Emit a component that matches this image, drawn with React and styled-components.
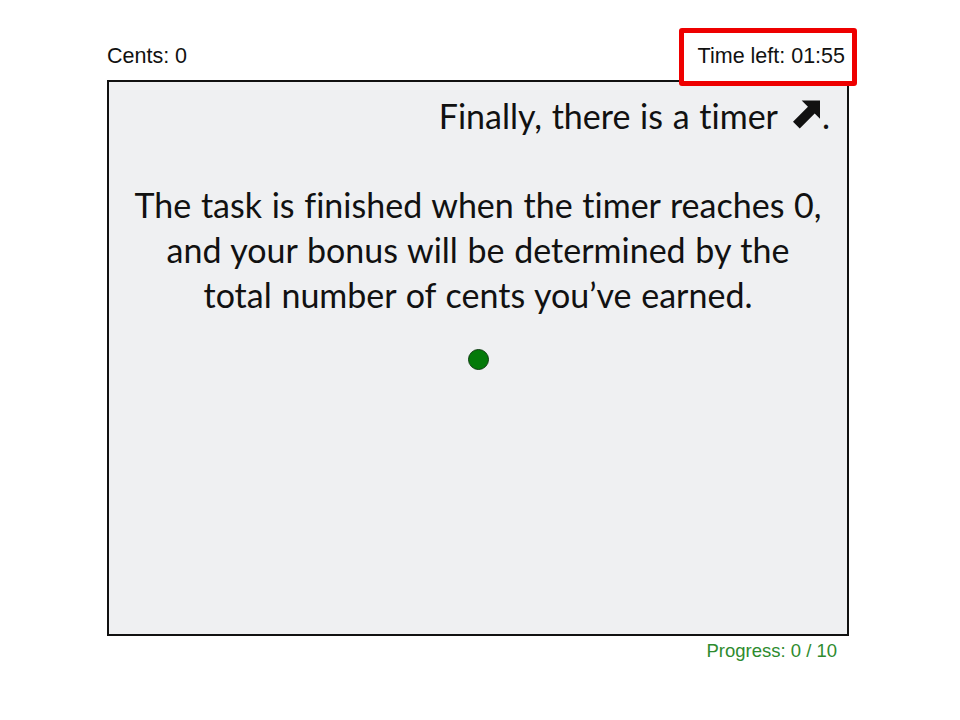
import React from "react";
import styled, { createGlobalStyle } from "styled-components";

const Global = createGlobalStyle`
  html, body { margin: 0; padding: 0; background: #ffffff; }
  body { width: 960px; height: 720px; overflow: hidden; }
`;

const Page = styled.div`
  width: 960px;
  height: 720px;
  background: #ffffff;
  padding-left: 107px;
  box-sizing: border-box;
`;

const Column = styled.div`
  width: 742px;
  display: flex;
  flex-direction: column;
`;

const Header = styled.div`
  height: 80px;
  display: flex;
  align-items: center;
  justify-content: space-between;
  padding-top: 33px;
  box-sizing: border-box;
`;

const Label = styled.span`
  font-family: "Liberation Sans", Arial, sans-serif;
  font-size: ${(p) => p.size || 21.5}px;
  color: ${(p) => p.color || "#111111"};
  line-height: 1;
`;

const TimerBox = styled.div`
  position: relative;
  z-index: 1;
  border: 5px solid #ee0000;
  border-radius: 3px;
  height: 58px;
  box-sizing: border-box;
  padding: 0 7px 0 14px;
  margin-right: -8px;
  display: flex;
  align-items: center;
  background: #ffffff;
`;

const Board = styled.div`
  height: 556px;
  border: 2px solid #111111;
  box-sizing: border-box;
  background: #eff0f2;
  display: flex;
  flex-direction: column;
  align-items: center;
  padding-top: 11px;
  font-family: Lato, "Open Sans", sans-serif;
  font-variant-ligatures: none;
  color: #111111;
`;

const Line = styled.p`
  margin: 0;
  align-self: ${(p) => (p.right ? "flex-end" : "center")};
  text-align: ${(p) => (p.right ? "right" : "center")};
  padding-right: ${(p) => (p.right ? "17px" : "0")};
  margin-top: ${(p) => p.gap || 0}px;
  font-size: 34px;
  word-spacing: 1px;
  line-height: 45px;
  display: flex;
  align-items: center;
  justify-content: center;
  flex-direction: ${(p) => (p.right ? "row" : "column")};
`;

const Arrow = styled.svg`
  width: 27px;
  height: 29px;
  margin: 0 2px 0 15px;
  position: relative;
  top: -1px;
`;

const Dot = styled.div`
  width: 19px;
  height: 19px;
  border-radius: 50%;
  background: #047a0a;
  border: 1px solid #0f3d12;
  margin-top: 32px;
`;

const Footer = styled.div`
  display: flex;
  justify-content: flex-end;
  padding: 6px 12px 0 0;
`;

export default function App() {
  return (
    <Page>
      <Global />
      <Column>
        <Header>
          <Label>Cents: 0</Label>
          <TimerBox>
            <Label>Time left: 01:55</Label>
          </TimerBox>
        </Header>
        <Board>
          <Line right>
            Finally, there is a timer
            <Arrow viewBox="0 0 28 29">
              <path d="M9 0 L28 0 L28 19 L22.5 13.5 L7 29 L0 22 L15.5 6.5 Z" fill="#111111" />
            </Arrow>
            .
          </Line>
          <Line gap={44}>
            <span>The task is finished when the timer reaches 0,</span>
            <span>and your bonus will be determined by the</span>
            <span>total number of cents you’ve earned.</span>
          </Line>
          <Dot />
        </Board>
        <Footer>
          <Label size={18.5} color="#2e8b2e">Progress: 0 / 10</Label>
        </Footer>
      </Column>
    </Page>
  );
}
